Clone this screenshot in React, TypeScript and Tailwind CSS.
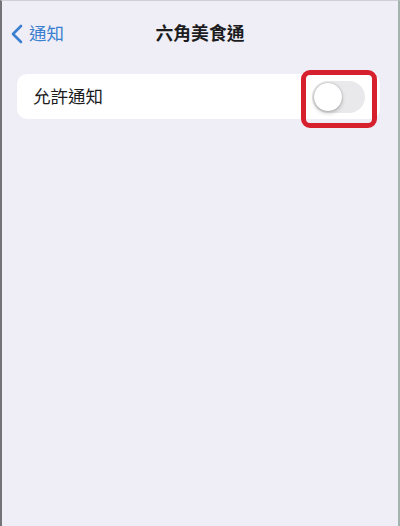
import React from "react";

export default function App() {
  return (
    <div
      className="w-[400px] h-[526px] bg-[#efeef6] border-l-2 border-l-[#737378] border-r-2 border-r-[#a3b4ae] border-t border-t-[#cfcfd3] flex flex-col"
      style={{ fontFamily: '"Noto Sans", "Noto Sans CJK TC", sans-serif' }}
    >
      <div className="mt-[11px] h-[44px] grid grid-cols-[1fr_auto_1fr] items-center px-[8px]">
        <div className="flex items-center gap-[5px] text-[#3a7fd0]">
          <svg width="14" height="20" viewBox="0 0 14 20" fill="none">
            <path d="M11 2 L3 10 L11 18" stroke="#3a7fd0" strokeWidth="2.6" strokeLinecap="round" strokeLinejoin="round" />
          </svg>
          <span className="text-[17.5px] leading-none">通知</span>
        </div>
        <div className="text-[17.8px] font-bold text-[#1c1c1e] leading-none">六角美食通</div>
        <div />
      </div>
      <div className="mt-[18px] ml-[15px] mr-[18px] h-[45px] bg-white rounded-[10px] flex items-center justify-between pl-[16px] pr-[15px]">
        <span className="text-[17.5px] text-[#1c1c1e] leading-none">允許通知</span>
        <div className="relative">
          <div className="w-[53px] h-[32px] rounded-full bg-[#e9e9eb] p-[2px] flex">
            <div className="w-[28px] h-[28px] rounded-full bg-white shadow-[0_2px_4px_rgba(0,0,0,0.22),0_0_1.5px_rgba(0,0,0,0.3)]" />
          </div>
          <div className="absolute left-[-11px] right-[-12px] top-[-11px] bottom-[-15px] border-[5px] border-[#d7202e] rounded-[9px]" />
        </div>
      </div>
    </div>
  );
}
